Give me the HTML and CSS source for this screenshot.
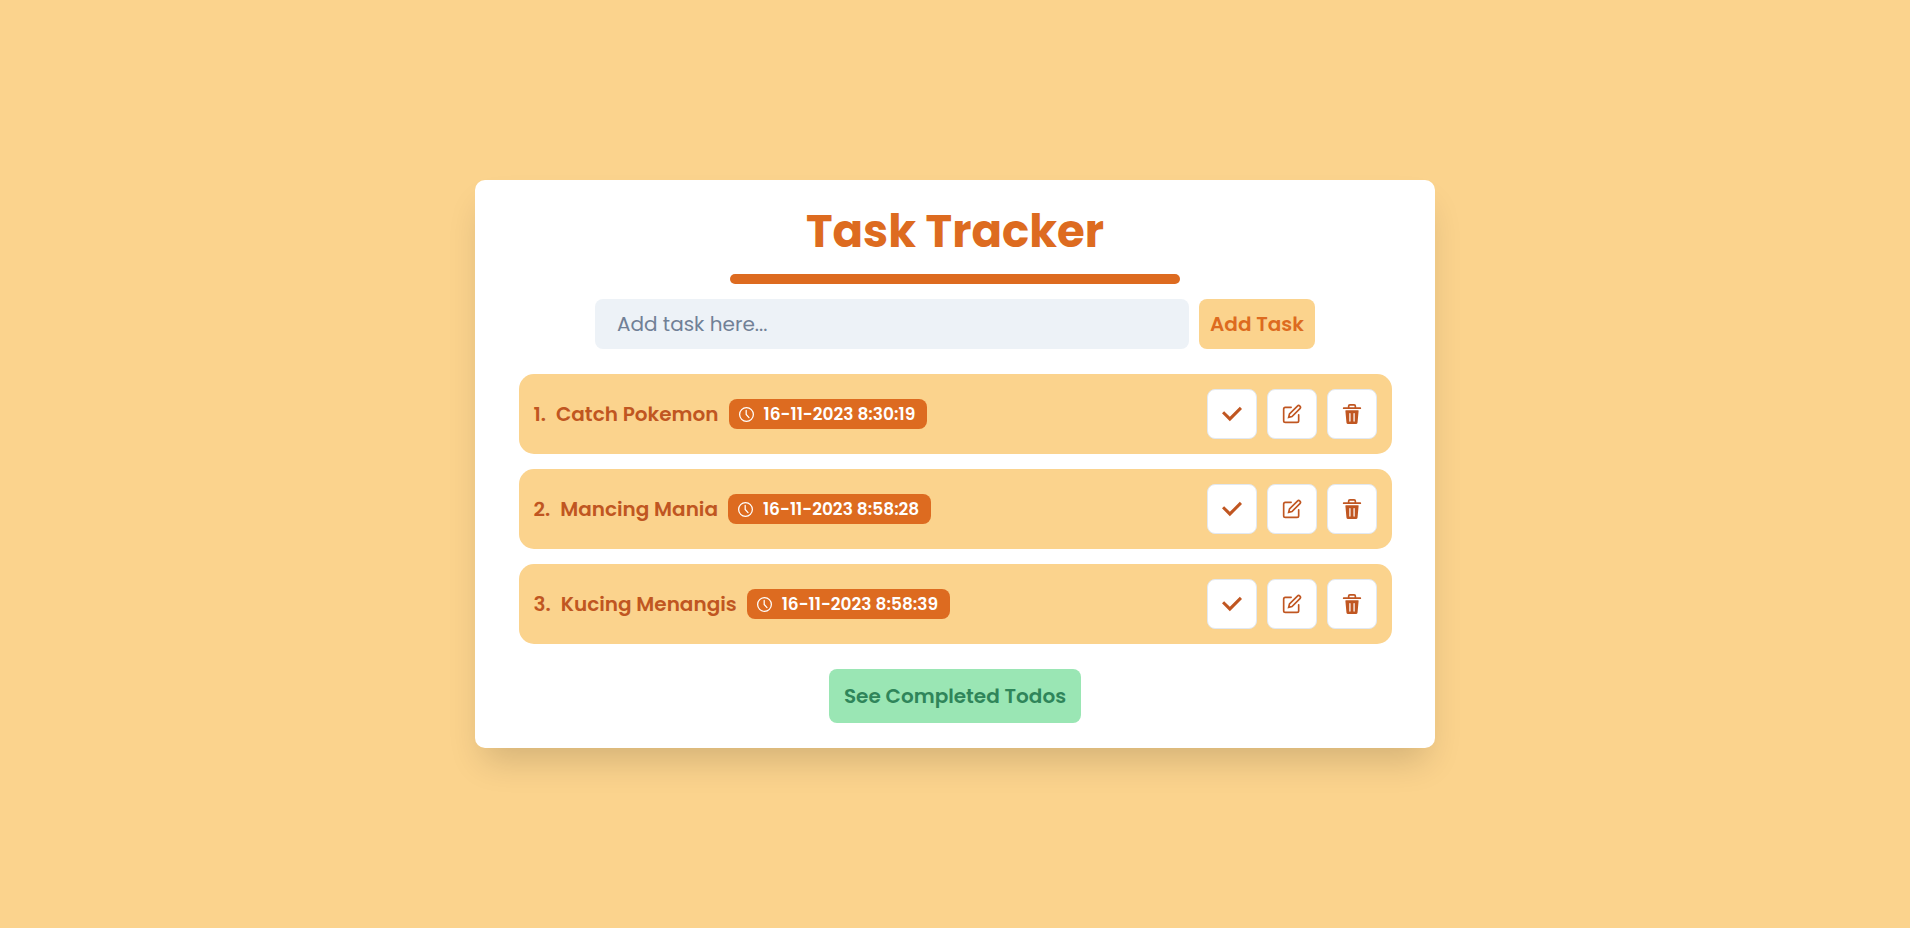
FILE: index.html
```html
<!DOCTYPE html>
<html lang="en">
<head>
<meta charset="utf-8">
<meta name="viewport" content="width=device-width, initial-scale=1">
<title>Task Tracker</title>
<link rel="stylesheet" href="styles.css">
</head>
<body>
<svg class="sprite" aria-hidden="true">
  <symbol id="check" viewBox="0 0 14 14"><path fill="currentColor" d="M5.5 12 14 3.5 12.5 2l-7 7-4-4L0 6.500z"/></symbol>
  <symbol id="edit" viewBox="0 0 24 24"><g fill="none" stroke="currentColor" stroke-linecap="round" stroke-width="2"><path d="M11 4H4a2 2 0 0 0-2 2v14a2 2 0 0 0 2 2h14a2 2 0 0 0 2-2v-7"/><path d="M18.500 2.500a2.121 2.121 0 0 1 3 3L12 15l-4 1 1-4Z"/></g></symbol>
  <symbol id="trash" viewBox="0 0 24 24"><path fill="currentColor" d="M19.452 7.500H4.547a.5.5 0 0 0-.5.545l1.287 14.136A2 2 0 0 0 7.326 24h9.347a2 2 0 0 0 1.992-1.819L19.950 8.045a.5.5 0 0 0-.129-.382.5.5 0 0 0-.369-.163zm-9.200 13a.75.75 0 0 1-1.500 0v-9a.75.75 0 0 1 1.500 0zm5 0a.75.75 0 0 1-1.500 0v-9a.75.75 0 0 1 1.500 0zM22 4h-4.750a.25.25 0 0 1-.25-.25V2.500A2.500 2.500 0 0 0 14.500 0h-5A2.500 2.500 0 0 0 7 2.500v1.250a.25.25 0 0 1-.25.25H2a1 1 0 0 0 0 2h20a1 1 0 0 0 0-2zM9 3.750V2.500a.5.5 0 0 1 .5-.5h5a.5.5 0 0 1 .5.5v1.250a.25.25 0 0 1-.25.25h-5.500A.25.25 0 0 1 9 3.750z"/></symbol>
  <symbol id="clock" viewBox="0 0 24 24"><g fill="none" stroke="currentColor" stroke-width="2"><circle cx="12" cy="12" r="11"/><path stroke-linecap="round" d="M11.500 5.500v6.500l4.500 5"/></g></symbol>
</svg>
<main class="card">
  <h1 class="title">Task Tracker</h1>
  <div class="rule"></div>
  <form class="add-form">
    <input class="task-input" type="text" placeholder="Add task here..." aria-label="New task">
    <button class="add-button" type="button">Add Task</button>
  </form>
  <ul class="tasks">
    <li class="task">
      <span class="number">1.</span>
      <span class="name">Catch Pokemon</span>
      <span class="badge"><svg class="clock"><use href="#clock"/></svg><time>16-11-2023 8:30:19</time></span>
      <span class="actions">
        <button class="action" type="button" aria-label="Complete"><svg class="icon"><use href="#check"/></svg></button>
        <button class="action" type="button" aria-label="Edit"><svg class="icon"><use href="#edit"/></svg></button>
        <button class="action" type="button" aria-label="Delete"><svg class="icon"><use href="#trash"/></svg></button>
      </span>
    </li>
    <li class="task">
      <span class="number">2.</span>
      <span class="name">Mancing Mania</span>
      <span class="badge"><svg class="clock"><use href="#clock"/></svg><time>16-11-2023 8:58:28</time></span>
      <span class="actions">
        <button class="action" type="button" aria-label="Complete"><svg class="icon"><use href="#check"/></svg></button>
        <button class="action" type="button" aria-label="Edit"><svg class="icon"><use href="#edit"/></svg></button>
        <button class="action" type="button" aria-label="Delete"><svg class="icon"><use href="#trash"/></svg></button>
      </span>
    </li>
    <li class="task">
      <span class="number">3.</span>
      <span class="name">Kucing Menangis</span>
      <span class="badge"><svg class="clock"><use href="#clock"/></svg><time>16-11-2023 8:58:39</time></span>
      <span class="actions">
        <button class="action" type="button" aria-label="Complete"><svg class="icon"><use href="#check"/></svg></button>
        <button class="action" type="button" aria-label="Edit"><svg class="icon"><use href="#edit"/></svg></button>
        <button class="action" type="button" aria-label="Delete"><svg class="icon"><use href="#trash"/></svg></button>
      </span>
    </li>
  </ul>
  <button class="completed-button" type="button">See Completed Todos</button>
</main>
</body>
</html>
```

FILE: styles.css
```css
* {
  box-sizing: border-box;
}

body {
  margin: 0;
  min-height: 100vh;
  display: flex;
  align-items: center;
  justify-content: center;
  background: #fbd38d;
  font-family: Poppins, Inter, sans-serif;
  font-size: 20px;
  line-height: 30px;
}

button,
input {
  font: inherit;
  border: 0;
  border-radius: 8px;
}

button {
  font-weight: 600;
  cursor: pointer;
}

.sprite {
  position: absolute;
  width: 0;
  height: 0;
}

.card {
  width: 100%;
  max-width: 960px;
  padding: 15px 40px 25px;
  display: flex;
  flex-direction: column;
  align-items: center;
  background: #fff;
  border-radius: 10px;
  box-shadow: 0 20px 35px -8px rgba(0, 0, 0, 0.16);
}

.title {
  margin: 0;
  padding: 1px 0 6px;
  color: #dd6b20;
  font-size: 45px;
  font-weight: 700;
  line-height: 72px;
}

.rule {
  width: 100%;
  max-width: 450px;
  height: 10px;
  border-radius: 5px;
  background: #dd6b20;
}

.add-form {
  width: 100%;
  max-width: 720px;
  margin: 15px 0 25px;
  display: flex;
  gap: 10px;
}

.task-input {
  flex: 1;
  min-width: 0;
  height: 50px;
  padding: 0 22px;
  background: #edf2f7;
  color: #1a202c;
}

.task-input::placeholder {
  color: #718096;
  opacity: 1;
}

.add-button {
  min-width: 116px;
  padding: 0 10px;
  background: #fbd38d;
  color: #dd6b20;
}

.tasks {
  width: 100%;
  max-width: 873px;
  margin: 0;
  padding: 0;
  display: flex;
  flex-direction: column;
  gap: 15px;
  list-style: none;
}

.task {
  min-height: 80px;
  padding: 15px;
  display: flex;
  align-items: center;
  gap: 10px;
  background: #fbd38d;
  border-radius: 15px;
  color: #c05621;
  font-weight: 600;
}

.badge {
  padding: 0 12px 0 10px;
  display: flex;
  align-items: center;
  gap: 10px;
  border-radius: 8px;
  background: #dd6b20;
  color: #fff;
  font-size: 17px;
  font-weight: 600;
}

.clock {
  width: 15px;
  height: 15px;
}

.actions {
  margin-left: auto;
  display: flex;
  gap: 10px;
}

.action {
  width: 50px;
  height: 50px;
  padding: 0;
  display: flex;
  align-items: center;
  justify-content: center;
  border: 1px solid #e2e8f0;
  background: #fff;
  color: #c05621;
}

.icon {
  width: 20px;
  height: 20px;
}

.completed-button {
  min-width: 252px;
  margin-top: 25px;
  padding: 12px 15px;
  background: #9ae6b4;
  color: #2f855a;
}
```
